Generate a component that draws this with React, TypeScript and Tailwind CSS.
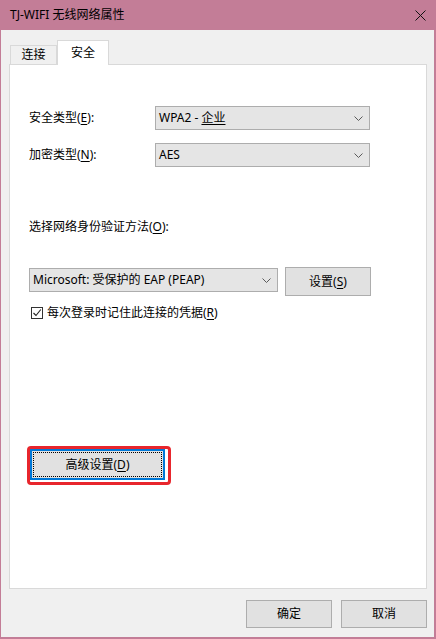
import React from "react";

const font = { fontFamily: '"Noto Sans", "Noto Sans CJK SC", sans-serif' };

const Chevron = () => (
  <svg width="9" height="5" viewBox="0 0 9 5" className="shrink-0">
    <polyline points="0.5,0.5 4.5,4.5 8.5,0.5" fill="none" stroke="#5a5a5a" strokeWidth="1" />
  </svg>
);

const Select = ({ value, className }: { value: React.ReactNode; className: string }) => (
  <div
    className={`flex h-[24px] items-center justify-between border border-[#adadad] bg-[#e5e5e5] pl-[3px] pr-[6px] text-[12px] text-black ${className}`}
  >
    <span>{value}</span>
    <Chevron />
  </div>
);

const Button = ({ children, className }: { children: React.ReactNode; className: string }) => (
  <div
    className={`flex items-center justify-center border border-[#adadad] bg-[#e1e1e1] text-[12px] text-black ${className}`}
  >
    {children}
  </div>
);

const U = ({ children }: { children: React.ReactNode }) => <span className="underline underline-offset-2">{children}</span>;

export default function App() {
  return (
    <div className="flex h-[639px] w-[436px] flex-col bg-[#c37d97]" style={font}>
      {/* title bar */}
      <div className="flex h-[30px] shrink-0 items-center justify-between pl-[10px] pr-[10px] text-[12px] text-black">
        <span>TJ-WIFI 无线网络属性</span>
        <svg width="11" height="11" viewBox="0 0 11 11">
          <path d="M0.5 0.5 L10.5 10.5 M10.5 0.5 L0.5 10.5" stroke="#111" strokeWidth="1" />
        </svg>
      </div>

      {/* body */}
      <div className="mx-[1px] mb-[2px] ml-[1px] mr-[2px] flex flex-1 flex-col bg-[#f0f0f0] pl-[8px] pr-[7px] pt-[10px]">
        {/* tabs */}
        <div className="flex h-[24px] items-end pl-[1px] text-[12px] text-black">
          <div className="flex h-[19px] w-[47px] items-center justify-center border border-b-0 border-[#d9d9d9] bg-[#f0f0f0]">
            连接
          </div>
          <div className="relative z-10 -mb-[1px] flex h-[25px] w-[52px] items-start justify-center border border-b-0 border-[#d9d9d9] bg-white pt-[3px]">
            安全
          </div>
        </div>

        {/* panel */}
        <div className="flex h-[525px] flex-col border border-[#d9d9d9] bg-white pl-[19px] text-[12px] text-black">
          <div className="mt-[41px] flex items-center">
            <span className="w-[126px]">
              安全类型(<U>E</U>):
            </span>
            <Select
              className="w-[215px]"
              value={
                <>
                  WPA2 - <U>企业</U>
                </>
              }
            />
          </div>
          <div className="mt-[13px] flex items-center">
            <span className="w-[126px]">
              加密类型(<U>N</U>):
            </span>
            <Select className="w-[215px]" value="AES" />
          </div>

          <div className="mt-[52px] h-[16px] leading-[16px]">
            选择网络身份验证方法(<U>O</U>):
          </div>

          <div className="mt-[32px] flex items-start">
            <Select className="mt-[1px] w-[249px]" value="Microsoft: 受保护的 EAP (PEAP)" />
            <Button className="ml-[7px] h-[29px] w-[86px]">
              设置(<U>S</U>)
            </Button>
          </div>

          <div className="mt-[10px] flex h-[14px] items-center">
            <div className="ml-[2px] flex h-[12px] w-[12px] items-center justify-center border border-[#333] bg-white">
              <svg width="10" height="10" viewBox="0 0 10 10">
                <polyline points="1.5,5 4,7.5 8.8,1.5" fill="none" stroke="#222" strokeWidth="1.1" />
              </svg>
            </div>
            <span className="ml-[4px]">
              每次登录时记住此连接的凭据(<U>R</U>)
            </span>
          </div>

          <div className="-ml-[2px] mt-[126px] h-[39px] w-[144px] rounded-[4px] border-[3px] border-[#e8262d] pb-[2px] pr-[3px]">
            <div className="h-full w-full border-2 border-[#0078d7] bg-[#e1e1e1] p-[1px]">
              <div className="flex h-full w-full items-center justify-center border border-dotted border-black text-[12px]">
                高级设置(<U>D</U>)
              </div>
            </div>
          </div>
        </div>

        {/* footer */}
        <div className="mt-[11px] flex justify-end gap-[9px] pr-[-1px]">
          <Button className="h-[28px] w-[86px]">确定</Button>
          <Button className="h-[28px] w-[86px]">取消</Button>
        </div>
      </div>
    </div>
  );
}
